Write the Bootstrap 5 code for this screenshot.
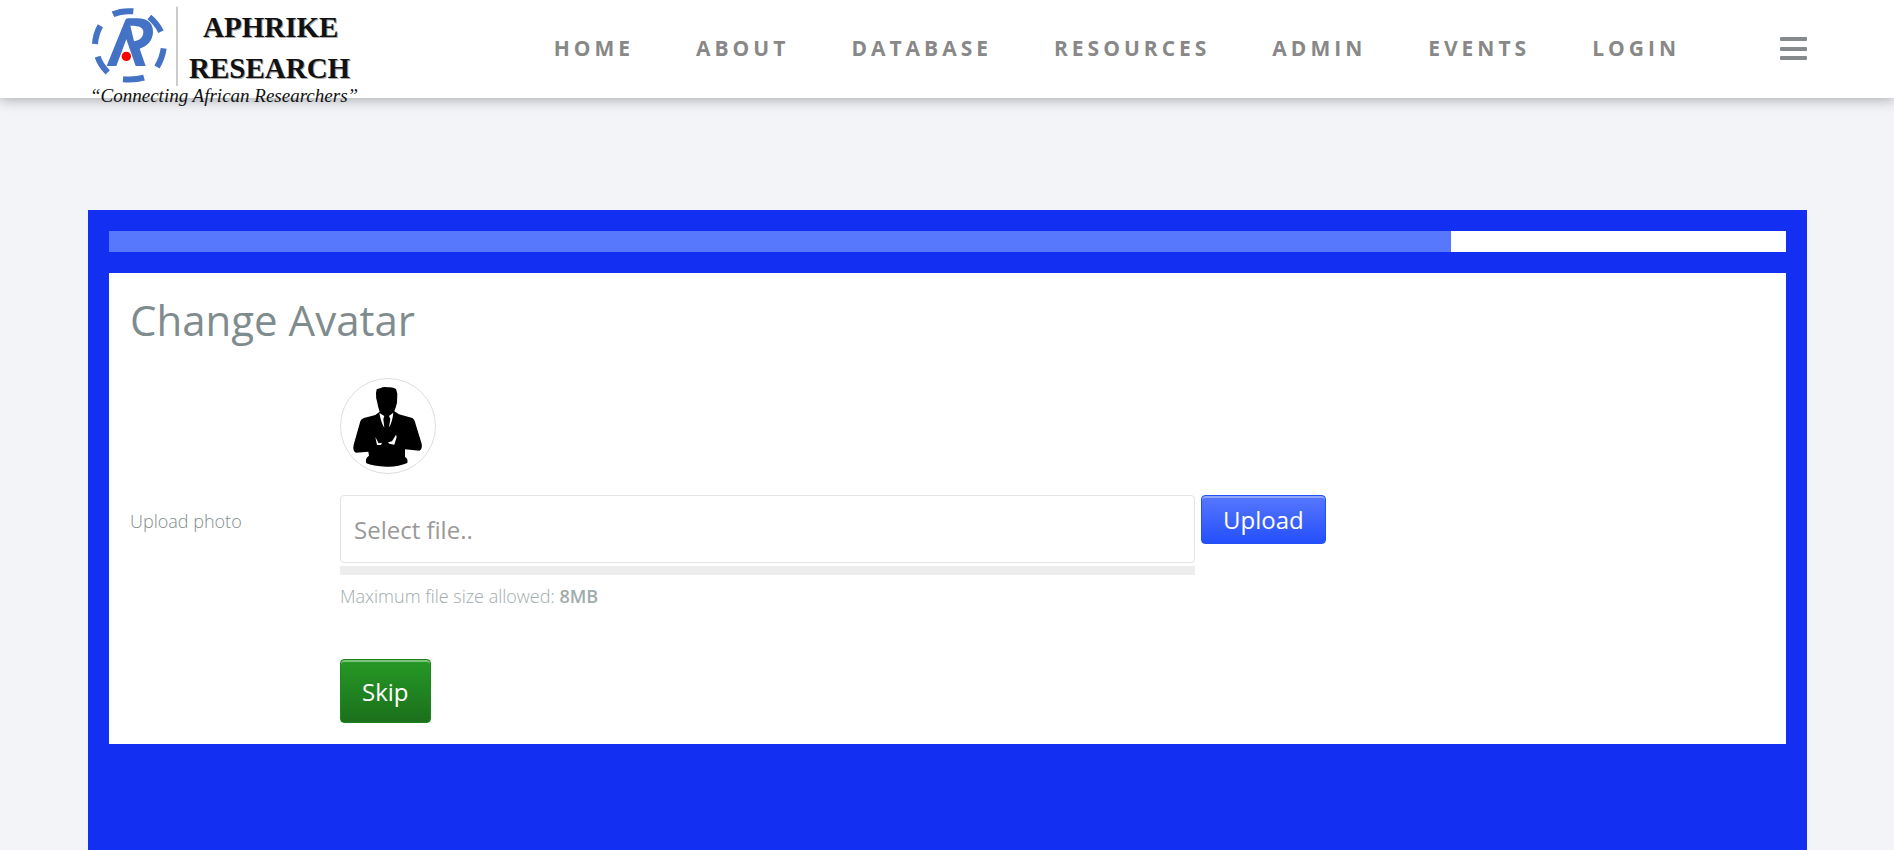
<!DOCTYPE html>
<html lang="en">
<head>
<meta charset="utf-8">
<meta name="viewport" content="width=device-width, initial-scale=1">
<title>Change Avatar - Aphrike Research</title>
<link href="https://cdn.jsdelivr.net/npm/bootstrap@5.3.0/dist/css/bootstrap.min.css" rel="stylesheet">
<style>
  body { background: #f2f4f8; color: #7f8c8d; font-family: "Open Sans", sans-serif; font-size: 18px; line-height: 26px; font-weight: 300; min-height: 100vh; }
  .page-gutter { padding-left: 88px; padding-right: 87px; }
  .site-header { height: 98px; background: #fff; box-shadow: 0 2px 12px rgba(0, 0, 0, .3); z-index: 10; }
  .brand-link { height: 98px; overflow: visible; }
  .site-nav .nav-link { color: #888; font-size: 21px; line-height: 30px; font-weight: 700; letter-spacing: 4px; padding: 33px 31px; }
  .menu-toggle { margin-left: 69px; margin-top: 37px; color: #858a8c; line-height: 0; }
  .site-main { margin-top: 112px; }
  .wizard { background: #1330f2; padding: 21px; }
  .wizard .progress { height: 21px; background: #fff; border-radius: 0; margin-bottom: 21px; }
  .wizard .progress-bar { background: #5777fd; }
  .wizard-panel { background: #fff; padding: 21px; }
  .panel-title { font-size: 42px; line-height: 52px; font-weight: 400; margin-bottom: 32px; }
  .form-line { margin-top: 21px; }
  .form-actions { margin-top: 50px; }
  .label-col { flex: 0 0 210px; padding-top: 13px; }
  .avatar { width: 96px; height: 96px; border: 1px solid #ddd; border-radius: 50%; overflow: hidden; }
  .file-col { width: 60%; }
  .file-name { height: 68px; font-size: 24px; line-height: 32px; padding: 18px 13px; border: 1px solid #e3e3e3; border-radius: 4px; }
  .file-name::placeholder { color: #999; opacity: 1; }
  .upload-bar { height: 9px; background: #ededed; margin-top: 3px; }
  .hint { color: #a0abac; margin-top: 8px; }
  .hint strong { font-weight: 600; }
  .act { color: #fff; font-size: 24px; line-height: 33px; padding: 7px 21px; border-radius: 4px; font-weight: 400; }
  .act-upload { background: linear-gradient(#5777fd, #2450fc); border: 1px solid #2450f5; box-shadow: inset 0 2px 0 rgba(255, 255, 255, .35); margin-left: 6px; }
  .act-skip { background: linear-gradient(#269926, #1b701b); border: 1px solid #1e851e; box-shadow: inset 0 2px 0 rgba(255, 255, 255, .4); padding: 15px 21px 14px; }
</style>
</head>
<body class="d-flex flex-column">
<header class="site-header page-gutter position-relative d-flex align-items-start">
  <a href="#" class="brand-link d-block" aria-label="Aphrike Research">
    <svg width="282" height="120" viewBox="8 0 282 120" aria-hidden="true">
      <svg width="290" height="120" viewBox="0 0 870 360">
        <g fill="none" stroke="#4472c4" stroke-width="18">
          <path d="M99 43Q125 31 160 34M208 51Q230 69 243 95M251 145Q247 174 231 201M192 233Q164 241 129 238M83 217Q60 194 53 170M45 132Q47 102 61 77"/>
        </g>
        <path fill="#4472c4" fill-rule="evenodd" d="M80 198L135 62Q137 55 144 55H170C207 55 220 73 219 97C218 123 202 138 179 146L197 198H167L139 118L109 198ZM151 77L162 124C181 121 190 110 190 96C190 83 180 77 151 77Z"/>
        <ellipse cx="139" cy="169" rx="14" ry="14" fill="#f00"/>
        <path d="M291 20V258" stroke="#999" stroke-width="3"/>
      </svg>
      <g font-family="'Liberation Serif', serif">
        <g font-size="29" font-weight="700" fill="#aaa">
          <text x="124" y="38">APHRIKE</text>
          <text x="110" y="79">RESEARCH</text>
        </g>
        <g font-size="29" font-weight="700" fill="#111">
          <text x="123" y="37">APHRIKE</text>
          <text x="109" y="78">RESEARCH</text>
        </g>
        <text x="10" y="102" font-size="19" font-style="italic" fill="#111">“Connecting African Researchers”</text>
      </g>
    </svg>
  </a>
  <nav class="site-nav nav flex-nowrap ms-auto" aria-label="Main">
    <a class="nav-link" href="#">HOME</a>
    <a class="nav-link" href="#">ABOUT</a>
    <a class="nav-link" href="#">DATABASE</a>
    <a class="nav-link" href="#">RESOURCES</a>
    <a class="nav-link" href="#">ADMIN</a>
    <a class="nav-link" href="#">EVENTS</a>
    <a class="nav-link" href="#">LOGIN</a>
  </nav>
  <button type="button" class="menu-toggle border-0 bg-transparent p-0" aria-label="Menu">
    <svg width="27" height="24" viewBox="0 0 27 24" fill="currentColor"><rect width="27" height="4" rx="1"/><rect y="10" width="27" height="4" rx="1"/><rect y="19" width="27" height="4" rx="1"/></svg>
  </button>
</header>

<main class="site-main page-gutter flex-grow-1 d-flex flex-column">
  <div class="wizard flex-grow-1">
    <div class="progress" role="progressbar" aria-label="Registration progress" aria-valuenow="80" aria-valuemin="0" aria-valuemax="100">
      <div class="progress-bar" style="width: 80%"></div>
    </div>
    <form class="wizard-panel">
      <h1 class="panel-title">Change Avatar</h1>
      <div class="d-flex">
        <div class="label-col"></div>
        <div class="avatar">
          <svg width="94" height="94" viewBox="63 42 282 282" role="img" aria-label="Current avatar">
            <path d="M168 84L170 73L182 69Q190 64 204 67Q219 65 228 72L232 86L231 113Q228 126 223 139L237 148L277 159Q284 163 287 178L305 236Q308 252 298 257L255 253L255 276Q265 281 262 294Q235 306 200 305Q158 304 139 295Q134 280 147 272L145 260L108 263Q97 258 101 239L121 169Q123 161 132 159L166 150L179 140Q174 126 172 113Q167 100 168 84Z"/>
            <path fill="#fff" d="M178 144L193 153L190 162L193 188Q184 176 178 144ZM220 143L207 153L211 162L207 187Q217 172 220 143ZM166 216L176 235L186 233L183 240H171ZM228 209L230 216L223 239L208 236L204 232L216 229Z"/>
          </svg>
        </div>
      </div>
      <div class="form-line d-flex">
        <label class="label-col" for="fileName">Upload photo</label>
        <div class="flex-grow-1">
          <div class="d-flex align-items-start">
            <div class="file-col">
              <input id="fileName" type="text" class="form-control file-name" placeholder="Select file.." readonly>
              <div class="upload-bar"></div>
            </div>
            <button type="button" class="btn act act-upload">Upload</button>
          </div>
          <div class="hint">Maximum file size allowed: <strong>8MB</strong></div>
        </div>
      </div>
      <div class="form-actions d-flex">
        <div class="label-col"></div>
        <button type="button" class="btn act act-skip">Skip</button>
      </div>
    </form>
  </div>
</main>
<script src="https://cdn.jsdelivr.net/npm/bootstrap@5.3.0/dist/js/bootstrap.bundle.min.js"></script>
</body>
</html>
